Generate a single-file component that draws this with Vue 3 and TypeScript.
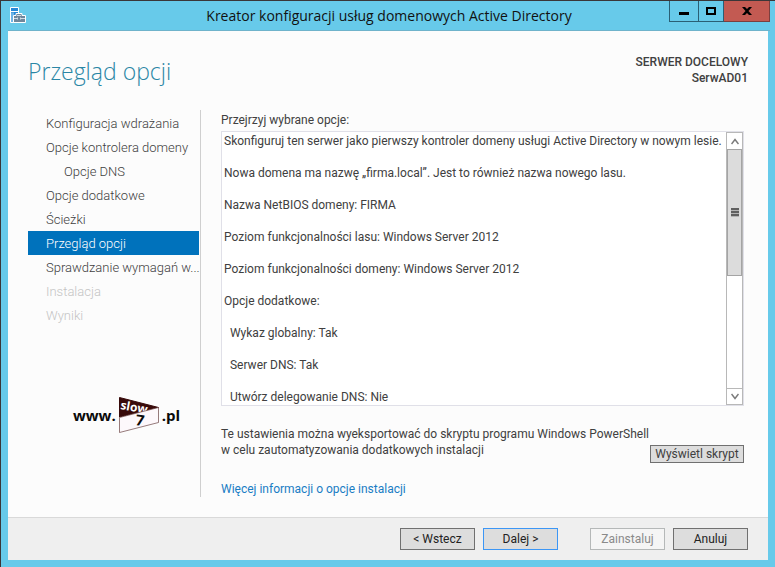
<script setup lang="ts">
import { ref } from 'vue'

interface Step {
  label: string
  nested?: boolean
  current?: boolean
  disabled?: boolean
}

const steps: Step[] = [
  { label: 'Konfiguracja wdrażania' },
  { label: 'Opcje kontrolera domeny' },
  { label: 'Opcje DNS', nested: true },
  { label: 'Opcje dodatkowe' },
  { label: 'Ścieżki' },
  { label: 'Przegląd opcji', current: true },
  { label: 'Sprawdzanie wymagań w...' },
  { label: 'Instalacja', disabled: true },
  { label: 'Wyniki', disabled: true },
]

const summary = [
  'Skonfiguruj ten serwer jako pierwszy kontroler domeny usługi Active Directory w nowym lesie.',
  'Nowa domena ma nazwę „firma.local”. Jest to również nazwa nowego lasu.',
  'Nazwa NetBIOS domeny: FIRMA',
  'Poziom funkcjonalności lasu: Windows Server 2012',
  'Poziom funkcjonalności domeny: Windows Server 2012',
  'Opcje dodatkowe:',
  '  Wykaz globalny: Tak',
  '  Serwer DNS: Tak',
  '  Utwórz delegowanie DNS: Nie',
].join('\n\n')

const box = ref<HTMLTextAreaElement | null>(null)

function scrollLines(count: number): void {
  box.value?.scrollBy({ top: count * 16 })
}
</script>

<template>
  <div class="window">
    <header class="titlebar">
      <svg class="app-icon" viewBox="0 0 16 16" width="16" height="16" aria-hidden="true">
        <path d="M0.500 0.500h8v15h-8z" fill="#2688d6" stroke="#fff" />
        <path d="M1 5.500h3v9.500h-3z" fill="#6fb4e6" />
        <path d="M1 4.500h7" stroke="#fff" />
        <path d="M3.500 8.500h2.500v-2h6v2h3.500v7h-12z" fill="#6f879c" stroke="#fff" />
        <path d="M7 8.500h4M4 11.500h3M11 11.500h4M7.500 10.500v2M10.500 10.500v2" stroke="#d3dde6" fill="none" />
      </svg>
      <h1 class="title">Kreator konfiguracji usług domenowych Active Directory</h1>
      <div class="window-buttons">
        <button type="button" class="win-btn min" aria-label="Minimalizuj">
          <svg viewBox="0 0 10 9" width="10" height="9"><path d="M0 5h10v3H0z" /></svg>
        </button>
        <button type="button" class="win-btn max" aria-label="Maksymalizuj">
          <svg viewBox="0 0 10 8" width="10" height="8"><path d="M1 1h8v6H1z" fill="none" stroke="#000" stroke-width="2" /></svg>
        </button>
        <button type="button" class="win-btn close" aria-label="Zamknij">
          <svg viewBox="0 0 10 8" width="10" height="8"><path d="M0 0h3l2 2 2-2h3L6.500 4 10 8H7L5 6 3 8H0l3.500-4z" /></svg>
        </button>
      </div>
    </header>

    <main class="page">
      <div class="heading">
        <h2 class="page-title">Przegląd opcji</h2>
        <p class="target">SERWER DOCELOWY<br />SerwAD01</p>
      </div>

      <div class="body">
        <nav class="sidebar">
          <ol class="steps">
            <li
              v-for="step in steps"
              :key="step.label"
              class="step"
              :class="{ nested: step.nested, current: step.current, disabled: step.disabled }"
            >
              {{ step.label }}
            </li>
          </ol>
          <div class="logo">
            <span>www.</span>
            <svg class="logo-mark" viewBox="0 0 40 36" width="40" height="36">
              <path d="M0.500 0.500L39.500 10.500L0.500 20z" fill="#380a0a" stroke="#380a0a" />
              <text x="1" y="12" transform="rotate(10 1 12)" class="logo-slow">slow</text>
              <path d="M0.500 20.500L39.500 10.500V25.500L0.500 35.500z" fill="#fdf8fb" stroke="#6a4444" stroke-width="0.700" />
              <text x="16" y="28" transform="rotate(8 16 28)" class="logo-seven">7</text>
            </svg>
            <span>.pl</span>
          </div>
        </nav>

        <section class="content">
          <label class="caption" for="summary">Przejrzyj wybrane opcje:</label>
          <div class="summary">
            <textarea id="summary" ref="box" class="summary-text" readonly wrap="off" :value="summary"></textarea>
            <div class="scrollbar">
              <button type="button" class="arrow" aria-label="W górę" @click="scrollLines(-1)">
                <svg viewBox="0 0 8 7" width="8" height="7"><path d="M0.500 6L4 1.500L7.500 6" /></svg>
              </button>
              <div class="track">
                <div class="thumb">
                  <svg viewBox="0 0 8 9" width="8" height="9"><path d="M0 0h8v9h-8z" class="grip-back" /><path d="M0 1h8M0 4h8M0 7h8" class="grip" /></svg>
                </div>
              </div>
              <button type="button" class="arrow down" aria-label="W dół" @click="scrollLines(1)">
                <svg viewBox="0 0 8 7" width="8" height="7"><path d="M0.500 1L4 5.500L7.500 1" /></svg>
              </button>
            </div>
          </div>
          <div class="export">
            <p class="export-text">
              Te ustawienia można wyeksportować do skryptu programu Windows PowerShell<br />
              w celu zautomatyzowania dodatkowych instalacji
            </p>
            <button type="button" class="btn script">Wyświetl skrypt</button>
          </div>
          <a class="more" href="#">Więcej informacji o opcje instalacji</a>
        </section>
      </div>
    </main>

    <footer class="footer">
      <button type="button" class="btn">&lt; Wstecz</button>
      <button type="button" class="btn primary">Dalej &gt;</button>
      <button type="button" class="btn install" disabled>Zainstaluj</button>
      <button type="button" class="btn">Anuluj</button>
    </footer>
  </div>
</template>

<style>
body {
  margin: 0;
}
</style>

<style scoped>
.window {
  box-sizing: border-box;
  min-height: 100vh;
  display: flex;
  flex-direction: column;
  padding: 0 7px 7px;
  border-top: 1px solid #3a3638;
  border-left: 1px solid #3a3638;
  background: #67caea;
  color: #404040;
  font: 12px/16px Roboto, "Open Sans", sans-serif;
}

.titlebar {
  display: grid;
  grid-template-columns: 101px 1fr 101px;
  align-items: start;
  height: 29px;
  margin-right: -2px;
  border-bottom: 1px solid #6fb3cb;
}

.app-icon {
  margin: 6px 0 0 2px;
}

.title {
  margin: 0;
  color: #111;
  font-family: "Open Sans", sans-serif;
  font-size: 14px;
  font-weight: 400;
  line-height: 30px;
  text-align: center;
  white-space: nowrap;
}

.window-buttons {
  display: flex;
}

.win-btn {
  box-sizing: border-box;
  display: flex;
  align-items: center;
  justify-content: center;
  height: 21px;
  padding: 0;
  border: 1px solid #2a5f75;
  border-top: 0;
  background: #67caea;
}

.min {
  width: 29px;
  border-right: 0;
}

.max {
  width: 26px;
}

.close {
  width: 46px;
  border-color: #7c3f3f;
  border-left: 0;
  background: #c35a52;
}

.page {
  flex: 1;
  display: flex;
  flex-direction: column;
  padding: 20px;
  background: #fcfcfc;
}

.heading {
  display: flex;
  justify-content: space-between;
  height: 59px;
}

.page-title {
  margin: 0;
  color: #2a86a5;
  font-family: "Open Sans", sans-serif;
  font-size: 23px;
  font-weight: 300;
  line-height: 40px;
}

.target {
  margin: 3px 0 0;
  font-weight: 500;
  text-align: right;
}

.body {
  flex: 1;
  display: flex;
  gap: 20px;
}

.sidebar {
  width: 172px;
  border-right: 1px solid #cfcfcf;
}

.steps {
  margin: 0;
  padding: 1px 0 0;
  list-style: none;
}

.step {
  margin-right: 1px;
  padding: 2px 0 0 18px;
  color: #404040;
  font-size: 13px;
  font-weight: 300;
  line-height: 22px;
  white-space: nowrap;
}

.nested {
  padding-left: 36px;
}

.current {
  background: #0072bc;
  color: #fff;
}

.disabled {
  color: #c4c4c4;
}

.logo {
  display: flex;
  align-items: center;
  justify-content: center;
  gap: 3px;
  margin: 70px 0 0 25px;
  color: #0a0a0a;
  font-family: "Open Sans", sans-serif;
  font-size: 15px;
  font-weight: 700;
}

.logo-mark {
  overflow: visible;
}

.logo-slow {
  fill: #fff;
  font-size: 12px;
  font-weight: 700;
}

.logo-seven {
  fill: #0a0a0a;
  font-size: 15px;
  font-weight: 700;
}

.content {
  flex: 1;
  display: flex;
  flex-direction: column;
  min-width: 0;
  padding-right: 4px;
}

.caption {
  margin: 2px 0 3px;
}

.summary {
  flex: 1;
  display: flex;
  border: 1px solid #e0e0e8;
  background: #fff;
}

.summary-text {
  flex: 1;
  min-width: 0;
  box-sizing: border-box;
  padding: 1px 0 0 2px;
  border: 0;
  outline: 0;
  background: #fff;
  color: #404040;
  font: inherit;
  overflow: hidden;
  resize: none;
}

.scrollbar {
  box-sizing: border-box;
  width: 17px;
  display: flex;
  flex-direction: column;
  border: 1px solid #b8b8b8;
}

.arrow {
  display: flex;
  align-items: center;
  justify-content: center;
  height: 16px;
  padding: 0;
  border: 0;
  background: #fff;
}

.arrow path {
  fill: none;
  stroke: #7a7a7a;
  stroke-width: 1.5;
}

.down {
  border-top: 1px solid #b8b8b8;
}

.track {
  flex: 1;
}

.thumb {
  box-sizing: border-box;
  height: 53%;
  display: flex;
  align-items: center;
  justify-content: center;
  border: 1px solid #a4a4a4;
  background: #dcdcdc;
}

.grip-back {
  fill: #b4b4b4;
}

.grip {
  stroke: #606060;
  stroke-width: 2;
}

.export {
  display: flex;
  align-items: flex-end;
  justify-content: space-between;
  height: 57px;
}

.export-text {
  align-self: flex-start;
  margin: 20px 0 0;
  white-space: nowrap;
}

.btn {
  box-sizing: border-box;
  min-width: 75px;
  height: 22px;
  padding: 0;
  border: 1px solid #707070;
  background: #dddddd;
  color: #222;
  font: inherit;
}

.script {
  width: 94px;
  height: 18px;
  margin-left: -20px;
  color: #404040;
  line-height: 16px;
  white-space: nowrap;
}

.more {
  align-self: flex-start;
  margin-top: 18px;
  color: #1a7dc4;
  text-decoration: none;
}

.footer {
  display: flex;
  justify-content: flex-end;
  gap: 8px;
  padding: 10px 20px;
  border-top: 1px solid #d9d9d9;
  background: #efefef;
}

.primary {
  border-color: #3c96f5;
}

.install {
  margin-left: 24px;
  border-color: #b5b8b8;
  background: #f5f5f5;
  color: #8a8a8a;
}
</style>
